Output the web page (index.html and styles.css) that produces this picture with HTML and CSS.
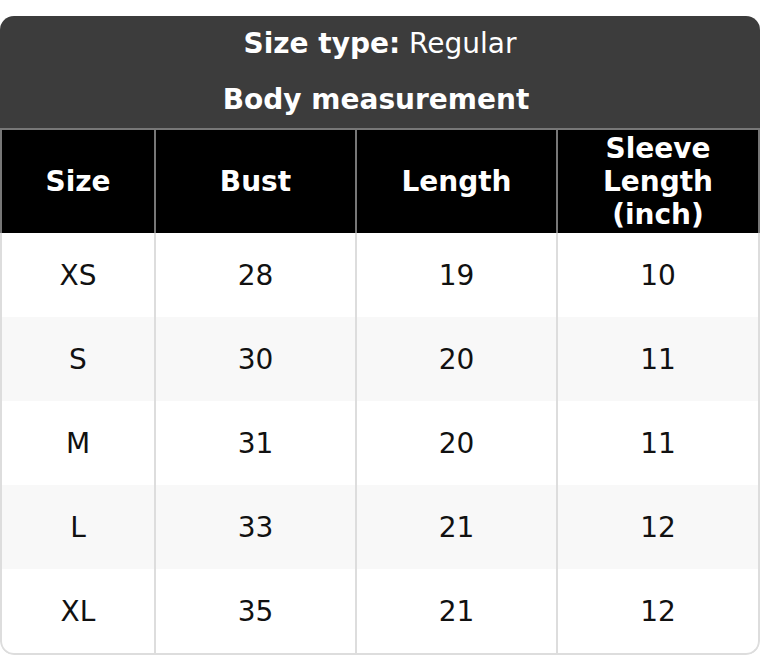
FILE: index.html
```html
<!DOCTYPE html>
<html lang="en">
<head>
<meta charset="utf-8">
<title>Size chart</title>
<link rel="stylesheet" href="styles.css">
</head>
<body>
<div class="card">
  <div class="title">
    <div class="title-line"><span class="strong">Size type:</span> Regular</div>
    <div class="title-line subtitle strong">Body measurement</div>
  </div>
  <div class="row head">
    <div class="cell">Size</div>
    <div class="cell">Bust</div>
    <div class="cell">Length</div>
    <div class="cell">Sleeve Length (inch)</div>
  </div>
  <div class="rows">
    <div class="row">
      <div class="cell">XS</div><div class="cell">28</div><div class="cell">19</div><div class="cell">10</div>
    </div>
    <div class="row alt">
      <div class="cell">S</div><div class="cell">30</div><div class="cell">20</div><div class="cell">11</div>
    </div>
    <div class="row">
      <div class="cell">M</div><div class="cell">31</div><div class="cell">20</div><div class="cell">11</div>
    </div>
    <div class="row alt">
      <div class="cell">L</div><div class="cell">33</div><div class="cell">21</div><div class="cell">12</div>
    </div>
    <div class="row">
      <div class="cell">XL</div><div class="cell">35</div><div class="cell">21</div><div class="cell">12</div>
    </div>
  </div>
</div>
</body>
</html>
```

FILE: styles.css
```css
html, body {
  margin: 0;
  padding: 0;
  background: #ffffff;
}

body {
  padding-top: 16px;
  font-family: "DejaVu Sans", "Liberation Sans", sans-serif;
  font-size: 28px;
  color: #111111;
}

.card {
  width: 760px;
  border-radius: 14px;
  overflow: hidden;
}

.title {
  background: #3c3c3c;
  color: #ffffff;
  text-align: center;
  border-bottom: 2px solid #777777;
}

.title-line {
  height: 56px;
  line-height: 56px;
}

.subtitle {
  padding-right: 8px;
}

.strong {
  font-weight: bold;
}

.row {
  display: grid;
  grid-template-columns: 154px 201px 201px 1fr;
  height: 84px;
}

.cell {
  display: flex;
  align-items: center;
  justify-content: center;
  text-align: center;
  border-right: 2px solid #dddddd;
  padding: 0 12px;
}

.cell:last-child {
  border-right: none;
}

.head {
  height: 103px;
  background: #000000;
  color: #ffffff;
  font-weight: bold;
  line-height: 33px;
  border-left: 2px solid #777777;
  border-right: 2px solid #777777;
}

.head .cell {
  border-right-color: #777777;
}

.rows {
  border: 2px solid #dddddd;
  border-top: none;
  border-radius: 0 0 14px 14px;
  overflow: hidden;
}

.alt {
  background: #f8f8f8;
}
```
